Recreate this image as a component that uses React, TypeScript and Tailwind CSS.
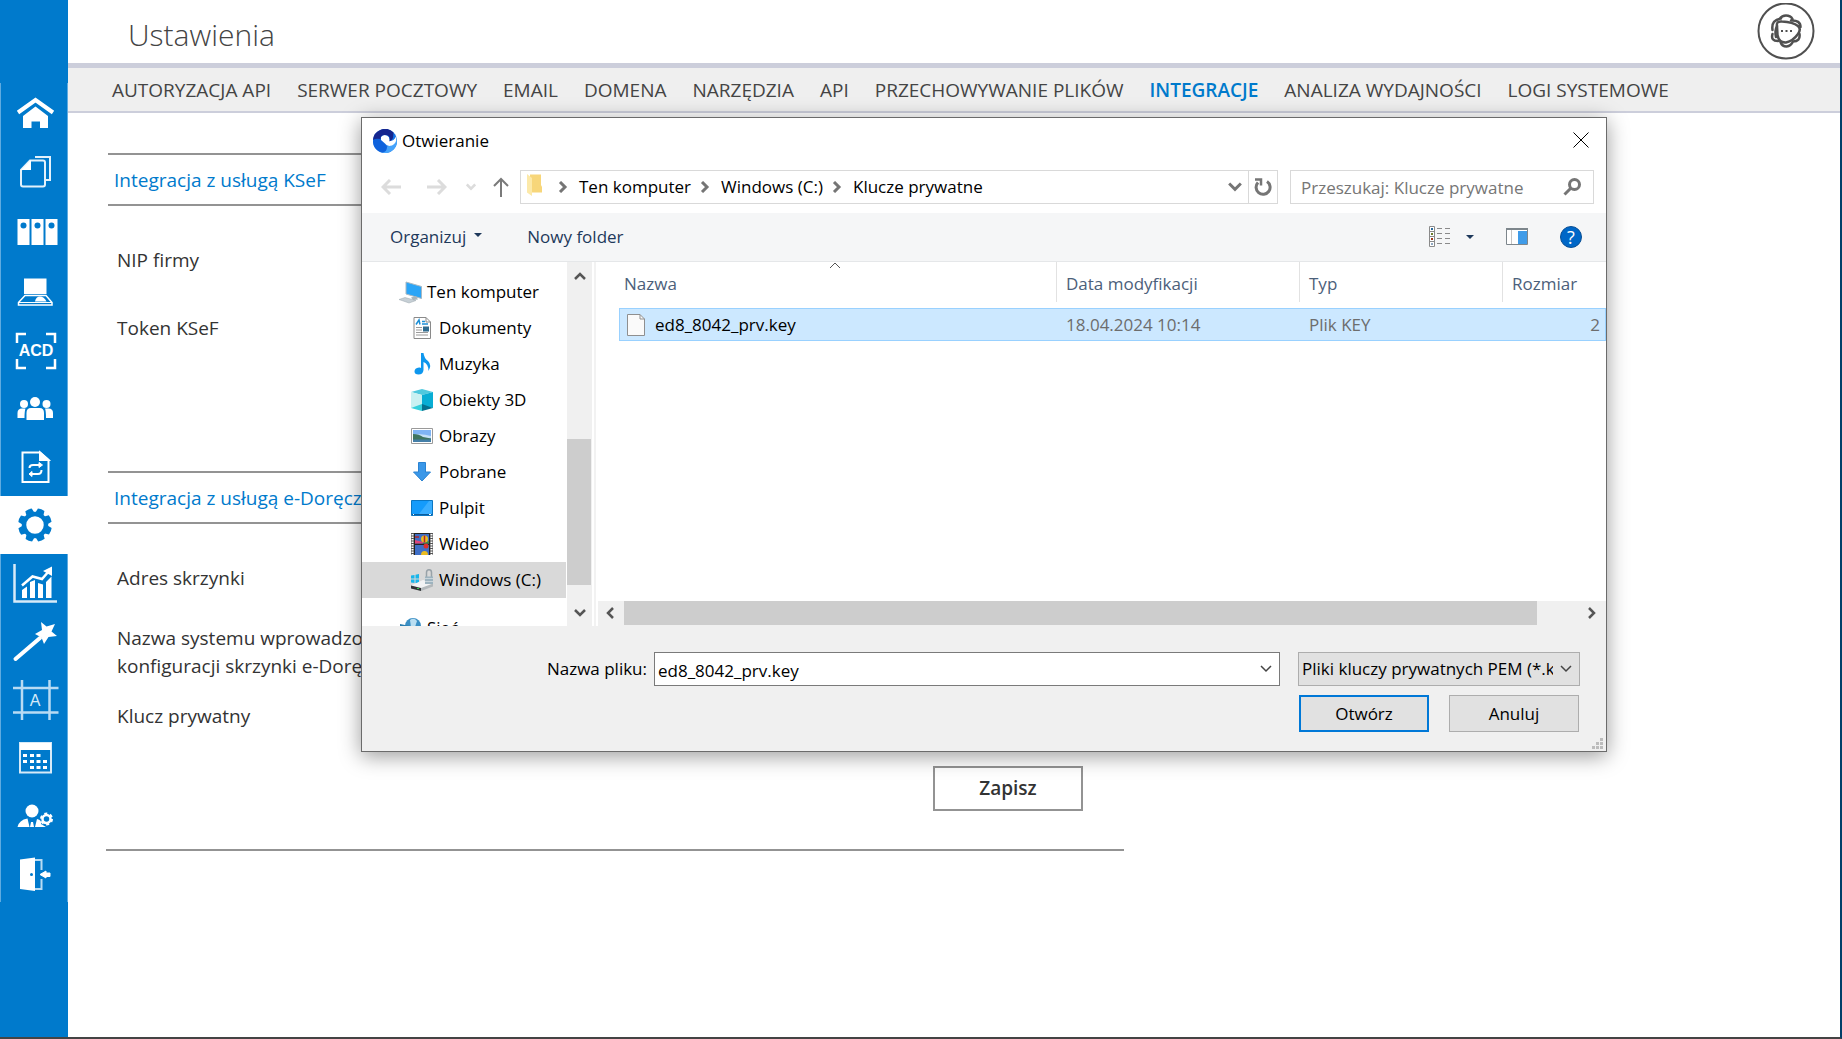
import type { ReactNode } from "react";

const tabs = [
	"AUTORYZACJA API",
	"SERWER POCZTOWY",
	"EMAIL",
	"DOMENA",
	"NARZĘDZIA",
	"API",
	"PRZECHOWYWANIE PLIKÓW",
	"INTEGRACJE",
	"ANALIZA WYDAJNOŚCI",
	"LOGI SYSTEMOWE",
];

const activeTab = "INTEGRACJE";

interface SideItem {
	label: string;
	icon: ReactNode;
	active?: boolean;
}

// Ikony rysowane na siatce 68x58, tyle ile ma jedna komórka paska
const mainItems: SideItem[] = [
	{
		label: "Start",
		icon: (
			<>
				<path d="M18 29.5 35.5 17 53 29.5" fill="none" stroke="#fff" strokeWidth="4" />
				<path d="M23 33 35.5 23.5 48 33V45H40V38.5H31.5V45H23Z" fill="#fff" />
			</>
		),
	},
	{
		label: "Dokumenty",
		icon: (
			<g fill="none" stroke="#e3f1fb" strokeWidth="2">
				<path d="M35 15H50V38H46" />
				<path d="M30 18.5H43Q45 18.5 45 20.5V42.5Q45 44.5 43 44.5H23Q21 44.5 21 42.5V28Z" />
				<path d="M31 18V28H21Z" fill="#fff" stroke="none" />
			</g>
		),
	},
	{
		label: "Segregatory",
		icon: (
			<>
				<path d="M17.5 18h12v26h-12zM31.5 18h12v26h-12zM45.5 18h12v26h-12z" fill="#fff" />
				<g fill="#007acc">
					<circle cx="23.5" cy="24.5" r="3" />
					<circle cx="37.5" cy="24.5" r="3" />
					<circle cx="51.5" cy="24.5" r="3" />
				</g>
			</>
		),
	},
	{
		label: "Stanowisko",
		icon: (
			<>
				<path d="M24 18.5h22.5V34H24z" fill="#fff" />
				<path d="M25 35.5H46L52 42.5V45H18.5V42.5Z" fill="none" stroke="#fff" strokeWidth="1.5" />
				<path d="M18.5 42.5H52" stroke="#fff" strokeWidth="1" />
				<path d="M35 41.5Q36 36.5 40 36.5Q44 36.5 46.5 41.5Z" fill="#fff" />
			</>
		),
	},
	{
		label: "ACD",
		icon: (
			<>
				<path
					d="M26 15H17V24M46 15H55V24M26 49H17V40M46 49H55V40"
					fill="none"
					stroke="#fff"
					strokeWidth="2.5"
				/>
				<text
					x="36"
					y="37"
					textAnchor="middle"
					fontFamily="Liberation Sans"
					fontSize="16"
					fontWeight="700"
					fill="#fff"
				>
					ACD
				</text>
			</>
		),
	},
	{
		label: "Zespół",
		icon: (
			<g fill="#fff">
				<circle cx="24" cy="26" r="4" />
				<circle cx="46.5" cy="26" r="4" />
				<circle cx="35" cy="24" r="5" />
				<path d="M17.5 40V35Q17.5 30.5 22 30.5H25.5Q24.5 33 24.5 40ZM53 40V35Q53 30.5 48.5 30.5H45Q46 33 46 40Z" />
				<path d="M26.5 42V35Q26.5 30 31 30H39.5Q44 30 44 35V42Z" />
			</g>
		),
	},
	{
		label: "Wymiana",
		icon: (
			<g fill="none" stroke="#fff" strokeWidth="2">
				<path d="M22.5 15.5H40L48.5 23V45H22.5Z" />
				<path d="M40 15.5V23H48.5Z" fill="#fff" />
				<path d="M29.5 31Q29.5 28 33 28H41M41.5 33Q41.5 37 38 37H30" />
				<path d="M39 25.5 42.5 28 39 30.5ZM32 34.5 29 37 32 39.5Z" fill="#fff" strokeWidth="1" />
			</g>
		),
	},
	{
		label: "Ustawienia",
		active: true,
		icon: (
			<g fill="#007acc">
				<circle cx="35" cy="29" r="11" fill="none" stroke="#007acc" strokeWidth="4.5" />
				{[22, 67, 112, 157, 202, 247, 292, 337].map((angle) => (
					<path
						key={angle}
						d="M30.5 19 31.5 12.5Q35 11.5 38.5 12.5L39.5 19Z"
						transform={`rotate(${angle} 35 29)`}
					/>
				))}
			</g>
		),
	},
];

const extraItems: SideItem[] = [
	{
		label: "Raporty",
		icon: (
			<>
				<path d="M14.5 10V47.5H57" fill="none" stroke="#d6eaf8" strokeWidth="2.5" />
				<path d="M22 44V36L27 32.5V44ZM30 44V28L35 26V44ZM38 44V29L43 30.5V44ZM46 44V28L51.5 22.5V44Z" fill="#fff" />
				<path d="M22 31.5 32.5 22.5 42 25 49 17" fill="none" stroke="#fff" strokeWidth="2.5" />
				<path d="M52 12.5V22L43 17Z" fill="#fff" />
			</>
		),
	},
	{
		label: "Kreator",
		icon: (
			<>
				<path d="M15.5 47 40 26" stroke="#fff" strokeWidth="4" strokeLinecap="round" />
				<path d="M41 10 46.5 14.5 55 12 51.5 19.5 57 24 48.5 25 44 32 41.5 25.5 35 22 42 18Z" fill="#fff" />
			</>
		),
	},
	{
		label: "Szablony",
		icon: (
			<>
				<path d="M22 10V50M49.5 10V50M13 18H58.5M13 42.5H58.5" stroke="#b8dbf3" strokeWidth="2.5" />
				<text x="35" y="35.5" textAnchor="middle" fontFamily="Liberation Sans" fontSize="16" fill="#d6eaf8">
					A
				</text>
			</>
		),
	},
	{
		label: "Kalendarz",
		icon: (
			<>
				<path d="M20 15H51V44.5H20Z" fill="none" stroke="#d6eaf8" strokeWidth="2" />
				<path d="M20 15H51V22H20Z" fill="#fff" />
				<path
					d="M23 26h4v3h-4zM30 26h4v3h-4zM36.5 26h4v3h-4zM23 32h4v3h-4zM30 32h4v3h-4zM36.5 32h4v3h-4zM43 32h4v3h-4zM30 38h4v3h-4zM36.5 38h4v3h-4zM43 38h4v3h-4z"
					fill="#fff"
				/>
			</>
		),
	},
	{
		label: "Konto",
		icon: (
			<>
				<circle cx="32" cy="25" r="6.5" fill="#fff" />
				<path d="M17.5 41Q19 34 27.5 32.5L29.5 41ZM31 36H33L34 41H30ZM35 41 37 33Q42 34 41 38L46 41Z" fill="#fff" />
				<circle cx="46.5" cy="33" r="4" fill="none" stroke="#fff" strokeWidth="2.5" />
				<circle cx="46.5" cy="33" r="5.5" fill="none" stroke="#fff" strokeWidth="2" strokeDasharray="3 2.76" />
			</>
		),
	},
	{
		label: "Wyloguj",
		icon: (
			<>
				<path d="M20 15.5 35 13.5V47L20 45Z" fill="#fff" />
				<circle cx="31.5" cy="30.5" r="1.5" fill="#007acc" />
				<path d="M35 16H41.5V26M41.5 35V45H35" fill="none" stroke="#b8dbf3" strokeWidth="2" />
				<path d="M50 29H46V27L40 30.5 46 34V32.5H50Z" fill="#fff" stroke="#fff" />
			</>
		),
	},
];

function SideLink({ item }: { item: SideItem }) {
	return (
		<a
			href="#"
			aria-label={item.label}
			className={item.active ? "block h-[58px] bg-white" : "block h-[58px]"}
		>
			<svg viewBox="0 0 68 58" className="block h-[58px] w-[68px]">
				{item.icon}
			</svg>
		</a>
	);
}

function SectionTitle({ children }: { children: ReactNode }) {
	return (
		<h2 className="flex h-[53px] items-center border-y-2 border-[#939393] px-1.5 pt-0.5 text-[19px] whitespace-nowrap text-[#007acc]">
			{children}
		</h2>
	);
}

interface FieldProps {
	id: string;
	label: ReactNode;
	spaced?: boolean;
}

function Field({ id, label, spaced }: FieldProps) {
	return (
		<div className={spaced ? "mb-2.5 flex items-start gap-10 px-[9px]" : "flex items-start gap-10 px-[9px]"}>
			<label htmlFor={id} className="w-[320px] text-[19px] leading-7 whitespace-nowrap">
				{label}
			</label>
			<input id={id} className="h-7 flex-1 border border-[#bbb] px-2" />
		</div>
	);
}

const folders: { name: string; selected?: boolean; icon: ReactNode }[] = [
	{
		name: "Dokumenty",
		icon: (
			<>
				<path d="M3 .5H15L19.5 5V21.5H3Z" fill="#fff" stroke="#8a8a8a" />
				<path d="M15 .5V5H19.5" fill="none" stroke="#8a8a8a" />
				<path d="M5 7.5 8 3 9 7.5M11 4.5H14M11 7H17" stroke="#1c8fd6" fill="none" strokeWidth="1.5" />
				<path d="M5 10.5H11M5 13H11M5 15.5H17M5 18H17" stroke="#9a9a9a" />
				<path d="M12 9.5h6v5h-6z" fill="#2f6b8f" />
			</>
		),
	},
	{
		name: "Muzyka",
		icon: (
			<path
				d="M10 0H12.5Q13 5 17 8Q21 12 17.5 18Q17.5 11 12.5 9V17Q12 21.5 7.5 21.5Q3.5 21.5 3.5 18.5Q3.5 15 8 14.5Q9.5 14.3 10 15Z"
				fill="#0e97ee"
			/>
		),
	},
	{
		name: "Obiekty 3D",
		icon: (
			<>
				<path d="M0 3 11 0 22 3 11 6Z" fill="#4fc9de" />
				<path d="M0 3 11 6V17L0 19Z" fill="#c9f1f2" />
				<path d="M11 6 22 3V19L11 17Z" fill="#08add4" />
				<path d="M0 19 11 15V22Z" fill="#35d0dc" />
				<path d="M11 15 22 19 11 22Z" fill="#04708f" />
			</>
		),
	},
	{
		name: "Obrazy",
		icon: (
			<>
				<path d="M.5 3.5H21.5V18.5H.5Z" fill="#fff" stroke="#9a9a9a" />
				<path d="M2 5H20V17H2Z" fill="#7fb4f5" />
				<path d="M2 10Q10 8 20 11V13H2Z" fill="#c5e0f7" />
				<path d="M2 9Q8 9 12 12L20 13.500V15H2Z" fill="#3f7561" />
				<path d="M2 14.5H20V17H2Z" fill="#447fa8" />
			</>
		),
	},
	{
		name: "Pobrane",
		icon: <path d="M7.5 1.5H14.5V11H19.5L11 20 2.5 11H7.5Z" fill="#3a97e8" stroke="#2a83d2" />,
	},
	{
		name: "Pulpit",
		icon: (
			<>
				<path d="M.5 3.5H21.5V18.5H.5Z" fill="#149bfb" stroke="#0b76c2" />
				<path d="M8 17 18 4H21V17Z" fill="#3aaeff" />
				<path d="M1 17.5H21" stroke="#0a5c9c" />
				<path d="M2 17.5H3M18 17.5H20" stroke="#fff" />
			</>
		),
	},
	{
		name: "Wideo",
		icon: (
			<>
				<path d="M0 0H22V22H0Z" fill="#555" />
				<path d="M1.5 1V22M20.5 1V22" stroke="#fff" strokeWidth="2" strokeDasharray="1.5 1" />
				<path d="M3 0H19V22H3Z" fill="#222" />
				<path d="M4 1H18V10.5H4ZM4 12H18V22H4Z" fill="#3e6ec6" />
				<path d="M4 7 12 9V10.5H4Z" fill="#e0457b" />
				<path d="M11 10.5 18 8V10.5Z" fill="#3b8a3f" />
				<circle cx="13.5" cy="6" r="3.5" fill="#e9bb20" />
				<path d="M13.5 2.5V9.5M4 4H8" stroke="#b3262a" strokeWidth="1.5" />
				<circle cx="15" cy="13" r="2.5" fill="#d8302d" />
				<path d="M10 22Q10 18 13.5 18Q17 18 17 22Z" fill="#e9bb20" />
			</>
		),
	},
	{
		name: "Windows (C:)",
		selected: true,
		icon: (
			<>
				<path d="M0 6.5 3.5 6V9.500H0ZM4.5 5.8 8 5V9.5H4.5ZM0 10.5H3.5V14L0 13.5ZM4.5 10.5H8V14.5L4.5 14Z" fill="#19b5ea" />
				<path d="M0 16.5 12 11 22 14.5V17L10 19.500Z" fill="#f2f3f4" />
				<path d="M10 19 22 14.5V17.5L10 22Z" fill="#b3b8bb" />
				<path d="M0 16.5 10 19V22L0 19.5Z" fill="#303336" />
				<path d="M6 19.5H8" stroke="#35d04a" />
				<path d="M15.5 8V3.5Q15.5 .8 18 .8Q20.5 .8 20.5 3.5V8" fill="none" stroke="#98a2a8" strokeWidth="1.5" />
				<path d="M14 7.5H22V15H14Z" fill="#9db3bf" />
				<path d="M14 9.500H22M14 12.500H22" stroke="#c9d5db" />
			</>
		),
	},
];

function Chevron({ d, className }: { d: string; className: string }) {
	return (
		<svg viewBox="0 0 12 12" className={className} fill="none" stroke="currentColor">
			<path d={d} />
		</svg>
	);
}

const UP = "M1 9 6 4 11 9";
const DOWN = "M1 3 6 8 11 3";
const LEFT = "M8 1 3 6 8 11";
const RIGHT = "M3 1 8 6 3 11";

function TitleBar() {
	return (
		<div className="flex h-[52px] items-start justify-between pt-[9px] pr-[17px] pl-[11px]">
			<div className="flex items-center gap-[5px]">
				<svg viewBox="0 0 24 24" className="size-6">
					<circle cx="12" cy="12" r="12" fill="#1673e6" />
					<path d="M24 10A12 12 0 0 1 10 23.800Q11 19 15 17Q21 16 24 10Z" fill="#45a3fb" />
					<path d="M0 12Q3 8 8 10L14 18Q14 23 9 23.600Q0 21 0 12Z" fill="#0f62dc" />
					<path d="M8 8Q10 5 14 6.500Q17 8 16.500 12Q21 12 23 7.500Q24.500 14 19 16.500Q14 18 12 14.500L8 11Z" fill="#fff" />
					<path d="M0 11A12 12 0 0 1 20.500 3.500L20 9Q18.500 12 16.500 12.500Q18 6 12 6Q7.500 6 7.500 10Q3 9 0 11Z" fill="#16268f" />
				</svg>
				<h2 id="dialog-title" className="text-[17px] leading-7">
					Otwieranie
				</h2>
			</div>
			<button type="button" aria-label="Zamknij" className="mt-[5px]">
				<svg viewBox="0 0 16 16" className="size-4" stroke="#000" strokeWidth="1">
					<path d="M.5 .5 15.5 15.5M15.5 .5 .5 15.5" />
				</svg>
			</button>
		</div>
	);
}

function AddressBar() {
	return (
		<div className="flex h-[43px] items-start pr-3 pl-[19px]">
			<div className="flex h-[34px] w-[139px] items-center text-[#dcdcdc]">
				<button type="button" aria-label="Wstecz" className="mr-[26px]">
					<svg viewBox="0 0 20 16" className="h-4 w-5" fill="none" stroke="currentColor" strokeWidth="3">
						<path d="M20 8H2M9 1 2 8 9 15" />
					</svg>
				</button>
				<button type="button" aria-label="Dalej" className="mr-[19px]">
					<svg viewBox="0 0 20 16" className="h-4 w-5" fill="none" stroke="currentColor" strokeWidth="3">
						<path d="M0 8H18M11 1 18 8 11 15" />
					</svg>
				</button>
				<button type="button" aria-label="Ostatnie lokalizacje" className="mr-4">
					<Chevron d={DOWN} className="size-[10px] stroke-3" />
				</button>
				<button type="button" aria-label="W górę" className="text-[#7a7a7a]">
					<svg viewBox="0 0 18 20" className="h-5 w-[18px]" fill="none" stroke="currentColor" strokeWidth="2">
						<path d="M9 20V2M2 9 9 2 16 9" />
					</svg>
				</button>
			</div>
			<div className="flex h-[34px] flex-1 items-center border border-[#d9d9d9] text-[17px]">
				<svg viewBox="0 0 16 22" className="mb-1 ml-1.5 h-[22px] w-4">
					<path d="M3 .5H14V11L15 13V18.5H3Z" fill="#f7d67a" />
					<path d="M0 0 5 4V22L0 18.5Z" fill="#fce9a9" />
				</svg>
				{["Ten komputer", "Windows (C:)", "Klucze prywatne"].map((part, i) => (
					<div key={part} className="flex items-center">
						<Chevron
							d={RIGHT}
							className={
								i === 0
									? "mr-2.5 ml-[14px] size-3 stroke-3 text-[#757575]"
									: "mr-2.5 ml-2 size-3 stroke-3 text-[#757575]"
							}
						/>
						<a href="#" className="whitespace-nowrap">
							{part}
						</a>
					</div>
				))}
				<button type="button" aria-label="Poprzednie lokalizacje" className="mr-1.5 ml-auto text-[#757575]">
					<Chevron d={DOWN} className="size-[14px] stroke-[2.5]" />
				</button>
				<button
					type="button"
					aria-label="Odśwież"
					className="flex h-full w-[29px] items-center justify-center border-l border-[#d9d9d9] text-[#757575]"
				>
					<svg viewBox="0 0 18 18" className="size-[18px]" fill="none" stroke="currentColor" strokeWidth="3">
						<path d="M13 3.5A7 7 0 1 1 4 4.5" />
						<path d="M1 1.500H7V7.500" strokeWidth="2.5" />
					</svg>
				</button>
			</div>
			<div className="ml-3 flex h-[34px] w-[304px] items-center border border-[#d9d9d9] pr-3 pl-2.5">
				<input
					type="text"
					aria-label="Przeszukaj"
					placeholder="Przeszukaj: Klucze prywatne"
					className="h-full min-w-0 flex-1 text-[17px] outline-none placeholder:text-[#767676]"
				/>
				<button type="button" aria-label="Szukaj">
					<svg viewBox="0 0 18 18" className="size-[18px]" fill="none" stroke="#757575" strokeWidth="3">
						<circle cx="11.5" cy="6.5" r="5" />
						<path d="M8 10 1.5 16.5" />
					</svg>
				</button>
			</div>
		</div>
	);
}

function Toolbar() {
	return (
		<div className="flex h-[49px] items-center border-b border-[#e5e7e9] bg-[#f5f6f7] pr-6 pl-7 text-[17px] text-[#1e395b]">
			<button type="button" className="flex items-center gap-2">
				Organizuj
				<svg viewBox="0 0 8 4" className="mb-1 h-1 w-2" fill="currentColor">
					<path d="M0 0H8L4 4Z" />
				</svg>
			</button>
			<button type="button" className="ml-[45px]">
				Nowy folder
			</button>
			<button type="button" aria-label="Zmień widok" className="ml-auto flex items-center gap-[15px]">
				<svg viewBox="0 0 22 22" className="size-[22px]" fill="none" stroke="#8a8a8a">
					<path d="M.5 .5H5.5V20.5H.5ZM.5 5.5H5.5M.5 10.5H5.5M.5 15.5H5.5" fill="#fff" />
					<path d="M8 2.5H13M16 2.5H21M8 7.5H13M16 7.5H21M8 12.5H13M16 12.5H21M8 17.5H13M16 17.5H21" />
					<path d="M2 3H4" stroke="#2a6a9c" strokeWidth="2" />
					<path d="M2 8H4" stroke="#6b7d2a" strokeWidth="2" />
					<path d="M2 13H4" stroke="#a33a1c" strokeWidth="2" />
					<path d="M2 18H4" stroke="#8fa8c2" strokeWidth="2" />
				</svg>
				<svg viewBox="0 0 8 4" className="h-1 w-2" fill="currentColor">
					<path d="M0 0H8L4 4Z" />
				</svg>
			</button>
			<button type="button" aria-label="Okienko podglądu" className="ml-8">
				<svg viewBox="0 0 22 18" className="h-[18px] w-[22px]">
					<path d="M.5 .5H21.5V16.5H.5Z" fill="#fff" stroke="#7d868c" />
					<path d="M0 1H22" stroke="#7d868c" strokeWidth="2" />
					<path d="M5.5 2V16" stroke="#c4c4c4" />
					<path d="M12 3H21V16H12Z" fill="#3f9be8" />
				</svg>
			</button>
			<button
				type="button"
				aria-label="Pomoc"
				className="ml-8 flex size-[22px] items-center justify-center rounded-full border border-[#0a4f94] bg-[#0067c7] text-[18px] text-white"
			>
				?
			</button>
		</div>
	);
}

function FolderTree() {
	return (
		<nav aria-label="Foldery" className="h-full w-[204px] overflow-hidden pt-3 text-[17px]">
			<a href="#" className="flex h-9 items-center gap-[5px] pl-[37px] whitespace-nowrap">
				<svg viewBox="0 0 23 22" className="size-[23px]">
					<path d="M7 .5 22.5 5V17L7 12.5Z" fill="#2ba5f7" stroke="#a9b8c2" />
					<path d="M12 16 17 14.5 19 18 14 18.5Z" fill="#a8b4bb" />
					<path d="M0 18 6 16 17 19 10 21.5Z" fill="#c6cfd5" stroke="#9aa7af" strokeWidth=".5" />
				</svg>
				Ten komputer
			</a>
			{folders.map((folder) => (
				<a
					key={folder.name}
					href="#"
					className={
						folder.selected
							? "flex h-9 items-center gap-1.5 bg-[#d9d9d9] pl-[49px] whitespace-nowrap"
							: "flex h-9 items-center gap-1.5 pl-[49px] whitespace-nowrap"
					}
				>
					<svg viewBox="0 0 22 22" className="size-[22px]">
						{folder.icon}
					</svg>
					{folder.name}
				</a>
			))}
			<a href="#" className="mt-3 flex h-9 items-center gap-[5px] pl-[38px]">
				<svg viewBox="0 0 22 22" className="size-[22px]">
					<circle cx="13" cy="9" r="8" fill="#3b8fc4" />
					<path d="M10 3Q14 0 17 4L15 10H11Z" fill="#b9def2" />
					<path d="M0 7 10 9V19L0 16Z" fill="#2b7eb0" />
				</svg>
				Sieć
			</a>
		</nav>
	);
}

function FileTable() {
	return (
		<table className="ml-[21px] table-fixed border-collapse text-left text-[17px] whitespace-nowrap">
			<colgroup>
				<col className="w-[438px]" />
				<col className="w-[243px]" />
				<col className="w-[203px]" />
				<col className="w-[103px]" />
			</colgroup>
			<thead className="text-[#4c607a]">
				<tr className="h-[46px] align-top">
					<th className="relative p-0 font-normal">
						<div className="flex h-10 items-center border-r border-[#e2e2e2] pt-1 pl-[5px]">Nazwa</div>
						<Chevron d={UP} className="absolute top-[-3px] left-[210px] size-3 text-[#555]" />
					</th>
					<th className="p-0 font-normal">
						<div className="flex h-10 items-center border-r border-[#e2e2e2] pt-1 pl-[9px]">Data modyfikacji</div>
					</th>
					<th className="p-0 font-normal">
						<div className="flex h-10 items-center border-r border-[#e2e2e2] pt-1 pl-[9px]">Typ</div>
					</th>
					<th className="p-0 font-normal">
						<div className="flex h-10 items-center pt-1 pl-[9px]">Rozmiar</div>
					</th>
				</tr>
			</thead>
			<tbody>
				<tr className="h-[33px] bg-[#cce8ff] text-[#6d6d6d] outline outline-offset-[-1px] outline-[#99d1ff]">
					<td className="p-0">
						<a href="#" className="flex items-center gap-2.5 pl-2 text-black">
							<svg viewBox="0 0 18 22" className="h-[22px] w-[18px]">
								<path d="M.5 .5H13L17.5 5V21.5H.5Z" fill="#fafafa" stroke="#8f8f8f" />
								<path d="M13 .5V5H17.5" fill="none" stroke="#8f8f8f" />
							</svg>
							ed8_8042_prv.key
						</a>
					</td>
					<td className="p-0 pl-[9px]">18.04.2024 10:14</td>
					<td className="p-0 pl-[9px]">Plik KEY</td>
					<td className="p-0 pr-1.5 text-right">2</td>
				</tr>
			</tbody>
		</table>
	);
}

function OpenDialog() {
	return (
		<section
			role="dialog"
			aria-labelledby="dialog-title"
			className="absolute top-[117px] left-[361px] w-[1246px] border border-[#6b6b6b] bg-white text-black shadow-[0_4px_20px_rgba(0,0,0,0.4)]"
		>
			<TitleBar />
			<AddressBar />
			<Toolbar />
			<div className="flex h-[364px]">
				<FolderTree />
				<div className="ml-px flex h-full w-[25px] flex-col items-center bg-[#f0f0f0] text-[#555]">
					<Chevron d={UP} className="mt-2 size-3 stroke-[2.5]" />
					<div className="mt-[157px] mr-px h-[146px] w-6 bg-[#cdcdcd]" />
					<Chevron d={DOWN} className="mt-auto mb-[7px] size-3 stroke-[2.5]" />
				</div>
				<div className="mx-0.5 w-0.5 bg-[#f2f2f2]" />
				<div className="flex min-w-0 flex-1 flex-col overflow-hidden">
					<FileTable />
					<div className="mt-auto flex h-[25px] items-start bg-[#f0f0f0] pr-2 pl-[7px] text-[#555]">
						<Chevron d={LEFT} className="mt-1.5 size-3 stroke-[2.5]" />
						<div className="ml-[7px] h-6 w-[913px] bg-[#cdcdcd]" />
						<Chevron d={RIGHT} className="mt-1.5 ml-auto size-3 stroke-[2.5]" />
					</div>
				</div>
			</div>
			<form className="relative flex flex-col gap-[9px] bg-[#f0f0f0] pt-[26px] pr-[26px] pb-[19px] text-[17px]">
				<div className="flex items-center justify-end">
					<label htmlFor="file-name" className="mr-[7px]">
						Nazwa pliku:
					</label>
					<div className="flex h-[34px] w-[626px] items-center border border-[#7a7a7a] bg-white pr-[7px]">
						<input
							id="file-name"
							defaultValue="ed8_8042_prv.key"
							className="h-full min-w-0 flex-1 pt-0.5 pl-[3px] outline-none"
						/>
						<button type="button" aria-label="Lista plików">
							<Chevron d={DOWN} className="size-3 stroke-[1.5] text-[#444]" />
						</button>
					</div>
					<div className="relative ml-[18px] w-[282px]">
						<select
							aria-label="Typ pliku"
							className="block h-[34px] w-full appearance-none border border-[#adadad] bg-[#e1e1e1] pr-[26px] pl-[3px] outline-none"
						>
							<option>Pliki kluczy prywatnych PEM (*.key)</option>
						</select>
						<Chevron
							d={DOWN}
							className="pointer-events-none absolute top-[11px] right-2 size-3 stroke-[1.5] text-[#444]"
						/>
					</div>
				</div>
				<div className="flex justify-end gap-5 pr-px">
					<button type="button" className="h-[37px] w-[130px] border-2 border-[#0078d7] bg-[#e1e1e1]">
						Otwórz
					</button>
					<button type="button" className="h-[37px] w-[130px] border border-[#adadad] bg-[#e1e1e1]">
						Anuluj
					</button>
				</div>
				<svg viewBox="0 0 11 11" className="absolute right-[3px] bottom-0.5 size-[11px]" fill="#bcbcbc">
					<path d="M8 0h3v3H8zM4 4h3v3H4zM8 4h3v3H8zM0 8h3v3H0zM4 8h3v3H4zM8 8h3v3H8z" />
				</svg>
			</form>
		</section>
	);
}

export default function App() {
	return (
		<div className="relative flex min-h-screen border-r-2 border-b-2 border-r-[#00406a] border-b-[#444] bg-white font-['Open_Sans','Noto_Sans',sans-serif] text-[#333]">
			<aside className="w-[68px] shrink-0 bg-[#007acc] pt-[83px]">
				<nav
					aria-label="Menu główne"
					className="shadow-[inset_1px_0_#5fabe0,inset_-1px_0_#5fabe0]"
				>
					<div className="flex flex-col gap-px">
						{mainItems.map((item) => (
							<SideLink key={item.label} item={item} />
						))}
					</div>
					{extraItems.map((item) => (
						<SideLink key={item.label} item={item} />
					))}
				</nav>
			</aside>

			<div className="min-w-0 flex-1">
				<header className="flex h-[68px] items-center justify-between border-b-[5px] border-[#cccedb] pr-[25px] pl-[60px]">
					<h1 className="pt-1.5 text-[30px] font-light text-[#444]">Ustawienia</h1>
					<svg viewBox="0 0 58 58" className="size-[58px]" fill="none" stroke="#505050">
						<circle cx="29" cy="28" r="27.5" strokeWidth="2" />
						<g strokeWidth="2.5" strokeLinecap="round">
							<path d="M20 23Q19 18 25 18.500Q36 19 41 23Q44.500 26 41 31Q36 38 29 39.500Q22 40 20.500 32Z" />
							<path d="M15.500 27Q14 17 24 15.500M22.500 16Q25 12.500 29 12.500Q33.500 12.500 35.500 16M34 17.500Q43.500 17 43.500 24" />
							<path d="M15.500 31Q13.500 38 21 38M23.500 39Q25 43.500 29.500 43.500Q34 43 36 38.500Q43.500 38.500 42.500 31" />
							<path d="M20 23Q17.500 28 19 34" />
						</g>
						<path d="M24 28H26M28.5 28H30.5M33 28H35" strokeWidth="2" />
					</svg>
				</header>
				<nav
					aria-label="Zakładki ustawień"
					className="flex h-[45px] items-center gap-[26px] border-b-2 border-[#cccedb] bg-[#efefef] pt-0.5 pl-11 text-[19px] whitespace-nowrap text-[#444]"
				>
					{tabs.map((tab) => (
						<a key={tab} href="#" className={tab === activeTab ? "font-semibold text-[#007acc]" : ""}>
							{tab}
						</a>
					))}
				</nav>

				<main className="ml-[38px] max-w-[1018px] border-b-2 border-[#939393] pt-10 pb-[38px] pl-0.5">
					<form>
						<SectionTitle>Integracja z usługą KSeF</SectionTitle>
						<div className="flex flex-col gap-10 pt-10 pb-[129px]">
							<Field id="nip" label="NIP firmy" />
							<Field id="token" label="Token KSeF" />
						</div>
						<SectionTitle>Integracja z usługą e-Doręczeń</SectionTitle>
						<div className="flex flex-col gap-[22px] pt-10 pb-9">
							<Field id="mailbox" label="Adres skrzynki" spaced />
							<Field
								id="system"
								label={
									<>
										Nazwa systemu wprowadzona w
										<br />
										konfiguracji skrzynki e-Doręczeń
									</>
								}
							/>
							<Field id="key" label="Klucz prywatny" />
						</div>
						<button
							type="button"
							className="mr-[41px] ml-auto block h-[45px] w-[150px] border-2 border-[#939393] text-[19px] font-semibold"
						>
							Zapisz
						</button>
					</form>
				</main>
			</div>

			<OpenDialog />
		</div>
	);
}
